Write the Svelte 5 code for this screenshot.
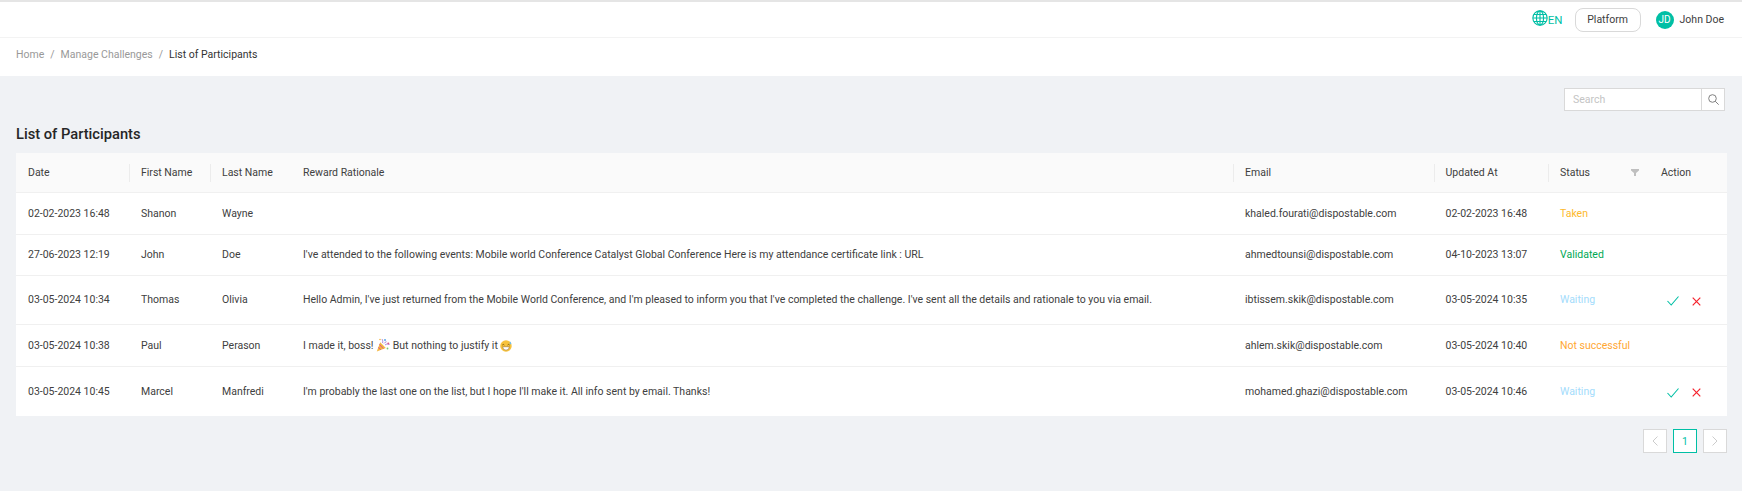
<script lang="ts">
  const rows = [
    { date: '02-02-2023 16:48', first: 'Shanon', last: 'Wayne', text: '', email: 'khaled.fourati@dispostable.com', updated: '02-02-2023 16:48', status: 'Taken', cls: 'taken' },
    { date: '27-06-2023 12:19', first: 'John', last: 'Doe', text: "I've attended to the following events: Mobile world Conference Catalyst Global Conference Here is my attendance certificate link : URL", email: 'ahmedtounsi@dispostable.com', updated: '04-10-2023 13:07', status: 'Validated', cls: 'validated' },
    { date: '03-05-2024 10:34', first: 'Thomas', last: 'Olivia', text: "Hello Admin, I've just returned from the Mobile World Conference, and I'm pleased to inform you that I've completed the challenge. I've sent all the details and rationale to you via email.", email: 'ibtissem.skik@dispostable.com', updated: '03-05-2024 10:35', status: 'Waiting', cls: 'waiting' },
    { date: '03-05-2024 10:38', first: 'Paul', last: 'Perason', text: 'emoji', email: 'ahlem.skik@dispostable.com', updated: '03-05-2024 10:40', status: 'Not successful', cls: 'failed' },
    { date: '03-05-2024 10:45', first: 'Marcel', last: 'Manfredi', text: "I'm probably the last one on the list, but I hope I'll make it. All info sent by email. Thanks!", email: 'mohamed.ghazi@dispostable.com', updated: '03-05-2024 10:46', status: 'Waiting', cls: 'waiting' }
  ];
  const heads = ['Date', 'First Name', 'Last Name', 'Reward Rationale', 'Email', 'Updated At', 'Status', 'Action'];
</script>

<div class="page">
  <header class="topbar">
    <div class="lang">
      <svg width="16" height="16" viewBox="0 0 17 17" fill="none" stroke="#00bfa5" stroke-width="1.200">
        <circle cx="8.500" cy="8.500" r="7.600" />
        <ellipse cx="8.500" cy="8.500" rx="3.800" ry="7.600" />
        <path d="M8.500 1v15M1 8.500h15M2 4.800h13M2 12.200h13" />
      </svg>
      <span>EN</span>
    </div>
    <button class="platform">Platform</button>
    <div class="user">
      <span class="avatar">JD</span>
      <span>John Doe</span>
    </div>
  </header>

  <nav class="crumbs">
    <span>Home</span><i>/</i><span>Manage Challenges</span><i>/</i><span class="current">List of Participants</span>
  </nav>

  <main class="content">
    <div class="search-row">
      <div class="search">
        <input type="text" placeholder="Search" />
        <button aria-label="Search">
          <svg width="11" height="11" viewBox="0 0 13 13" fill="none" stroke="#777" stroke-width="1.100">
            <circle cx="5.300" cy="5.300" r="4.500" />
            <path d="M8.600 8.600l4 4" />
          </svg>
        </button>
      </div>
    </div>

    <h1>List of Participants</h1>

    <table>
      <colgroup>
        <col style="width:113px" /><col style="width:81px" /><col style="width:81px" /><col style="width:942px" />
        <col style="width:200.5px" /><col style="width:114.5px" /><col style="width:101px" /><col style="width:78px" />
      </colgroup>
      <thead>
        <tr>
          {#each heads as head}
            <th>
              {head}
              {#if head === 'Status'}
                <svg class="filter" width="8" height="7" viewBox="0 0 8 7"><path d="M0 0h8v1.500L5 4v3H3V4L0 1.500z" fill="#bfbfbf" /></svg>
              {/if}
            </th>
          {/each}
        </tr>
      </thead>
      <tbody>
        {#each rows as row}
          <tr class:tall={row.cls === 'waiting'}>
            <td>{row.date}</td>
            <td>{row.first}</td>
            <td>{row.last}</td>
            <td>
              {#if row.text === 'emoji'}
                I made it, boss!
                <svg class="emoji" width="14" height="14" viewBox="0 0 14 14">
                  <path d="M.8 13.500l3.400-9.200 5.600 5.600z" fill="#f4b740" />
                  <path d="M2.400 9.300l2.400 2.500M3.400 6.400l4 4.200" stroke="#d9569a" stroke-width="1" />
                  <circle cx="9" cy="2" r="1" fill="#5aa9e6" />
                  <circle cx="12.300" cy="5.500" r="1" fill="#e6557a" />
                  <circle cx="4" cy="1.500" r=".8" fill="#f4b740" />
                  <path d="M6.500 5C7.200 3.400 6.500 2 6 1M9 7c1.500-1.300 3-1.200 4.500-.5M8 5.500c.6-1 1.500-1.500 2.500-1.800" stroke="#9b6bd3" stroke-width=".8" fill="none" />
                  <circle cx="11.500" cy="10.500" r=".9" fill="#7bc96f" />
                </svg>
                But nothing to justify it
                <svg class="emoji" width="12" height="12" viewBox="0 0 13 13">
                  <circle cx="6.500" cy="6.500" r="6.200" fill="#f7c23c" />
                  <path d="M2.500 5.500q1-1.500 2.200 0M8.200 5.500q1.100-1.500 2.200 0" stroke="#5f4300" stroke-width=".8" fill="none" />
                  <path d="M2.800 7.300h7.400q-.4 3.700-3.700 3.700T2.800 7.300z" fill="#fff" stroke="#7a4f10" stroke-width=".5" />
                  <path d="M11 1.500c1 1.300 1.500 2 1.100 2.800-.4.600-1.400.5-1.600-.2-.2-.7.1-1.500.5-2.600z" fill="#6bbcf0" />
                </svg>
              {:else}
                {row.text}
              {/if}
            </td>
            <td>{row.email}</td>
            <td>{row.updated}</td>
            <td class={row.cls}>{row.status}</td>
            <td>
              {#if row.cls === 'waiting'}
                <div class="actions">
                  <svg width="12" height="10" viewBox="0 0 12 10" fill="none" stroke="#00bfa5" stroke-width="1.100"><path d="M.5 5l3.700 4L11.500.5" /></svg>
                  <svg width="9" height="9" viewBox="0 0 9 9" fill="none" stroke="#f5222d" stroke-width="1.200"><path d="M.7.7l7.600 7.600M8.300.7L.7 8.300" /></svg>
                </div>
              {/if}
            </td>
          </tr>
        {/each}
      </tbody>
    </table>

    <div class="pager">
      <button aria-label="Previous"><svg width="6" height="10" viewBox="0 0 6 10" fill="none" stroke="#ccc"><path d="M5.500.5L1 5l4.500 4.500" /></svg></button>
      <button class="active">1</button>
      <button aria-label="Next"><svg width="6" height="10" viewBox="0 0 6 10" fill="none" stroke="#ccc"><path d="M.5.5L5 5 .5 9.500" /></svg></button>
    </div>
  </main>
</div>

<style>
  :global(body) {
    margin: 0;
    background: #f0f2f5;
  }

  .page {
    height: 491px;
    overflow: hidden;
    display: flex;
    flex-direction: column;
    font-family: Roboto, "Liberation Sans", sans-serif;
    font-size: 10.5px;
    color: #404040;
  }

  .topbar {
    height: 38px;
    flex: none;
    box-sizing: border-box;
    border-top: 2px solid #e5e5e5;
    border-bottom: 1px solid #f3f3f3;
    background: #fff;
    display: flex;
    align-items: center;
    justify-content: flex-end;
    padding-right: 18px;
  }

  .lang {
    display: flex;
    align-items: center;
    color: #00bfa5;
    font-size: 11.5px;
    margin-right: 12px;
    margin-top: -3px;
  }

  .lang span {
    margin-top: 3px;
  }

  .platform {
    width: 66px;
    height: 24px;
    border: 1px solid #d9d9d9;
    border-radius: 8px;
    background: #fff;
    font: inherit;
    color: #404040;
    padding: 0;
    margin-right: 15px;
  }

  .user {
    display: flex;
    align-items: center;
    gap: 6px;
  }

  .avatar {
    width: 18px;
    height: 18px;
    border-radius: 50%;
    background: #00bfa5;
    color: #fff;
    display: flex;
    align-items: center;
    justify-content: center;
    font-size: 10px;
  }

  .crumbs {
    height: 38px;
    flex: none;
    box-sizing: border-box;
    padding: 0 0 6px 16px;
    background: #fff;
    display: flex;
    align-items: center;
    color: #999;
  }

  .crumbs i {
    font-style: normal;
    margin: 0 6px;
  }

  .current {
    color: #333;
  }

  .content {
    flex: 1;
    background: #f0f2f5;
    padding: 12px 15px 0 16px;
  }

  .search-row {
    display: flex;
    justify-content: flex-end;
    padding-right: 2px;
  }

  .search {
    display: flex;
    height: 23px;
    width: 161px;
    background: #fff;
    border: 1px solid #d9d9d9;
    box-sizing: border-box;
  }

  .search input {
    flex: 1;
    min-width: 0;
    border: 0;
    outline: 0;
    padding: 0 8px;
    font: inherit;
  }

  .search input::placeholder {
    color: #c4c4c4;
  }

  .search button {
    width: 23px;
    border: 0;
    border-left: 1px solid #d9d9d9;
    background: #fff;
    padding: 0;
    display: flex;
    align-items: center;
    justify-content: center;
  }

  h1 {
    margin: 14px 0 9px;
    font-size: 14.7px;
    line-height: 19px;
    font-weight: 500;
    color: #262626;
  }

  table {
    width: 1711px;
    table-layout: fixed;
    border-collapse: separate;
    border-spacing: 0;
    background: #fff;
  }

  th {
    height: 40px;
    padding: 0 12px;
    background: #fafafa;
    font-weight: 400;
    text-align: left;
    position: relative;
    border-bottom: 1px solid #f0f0f0;
    box-sizing: border-box;
  }

  th + th::before {
    content: "";
    position: absolute;
    left: 0;
    top: 11px;
    height: 18px;
    width: 1px;
    background: #ececec;
  }

  th:nth-child(4)::before,
  th:last-child::before {
    display: none;
  }

  .filter {
    position: absolute;
    right: 10px;
    top: 16px;
  }

  td {
    height: 42px;
    padding: 0 12px 1px;
    border-bottom: 1px solid #f0f0f0;
    box-sizing: border-box;
    white-space: nowrap;
  }

  tr:nth-child(2) td {
    height: 41px;
  }

  tr:last-child td {
    border-bottom: 0;
  }

  tr.tall td {
    height: 49px;
  }

  .emoji {
    vertical-align: -3px;
  }

  .taken {
    color: #fdb92c;
  }

  .validated {
    color: #00a854;
  }

  .waiting {
    color: #a3dcfc;
  }

  .failed {
    color: #ffa733;
  }

  .actions {
    display: flex;
    align-items: center;
    gap: 13px;
    padding: 3px 0 0 6px;
  }

  .pager {
    display: flex;
    justify-content: flex-end;
    gap: 6px;
    margin-top: 13px;
  }

  .pager button {
    width: 24px;
    height: 24px;
    box-sizing: border-box;
    border: 1px solid #d9d9d9;
    background: #fff;
    padding: 0;
    font: inherit;
    display: flex;
    align-items: center;
    justify-content: center;
  }

  .pager .active {
    border-color: #00bfa5;
    color: #00bfa5;
  }
</style>
